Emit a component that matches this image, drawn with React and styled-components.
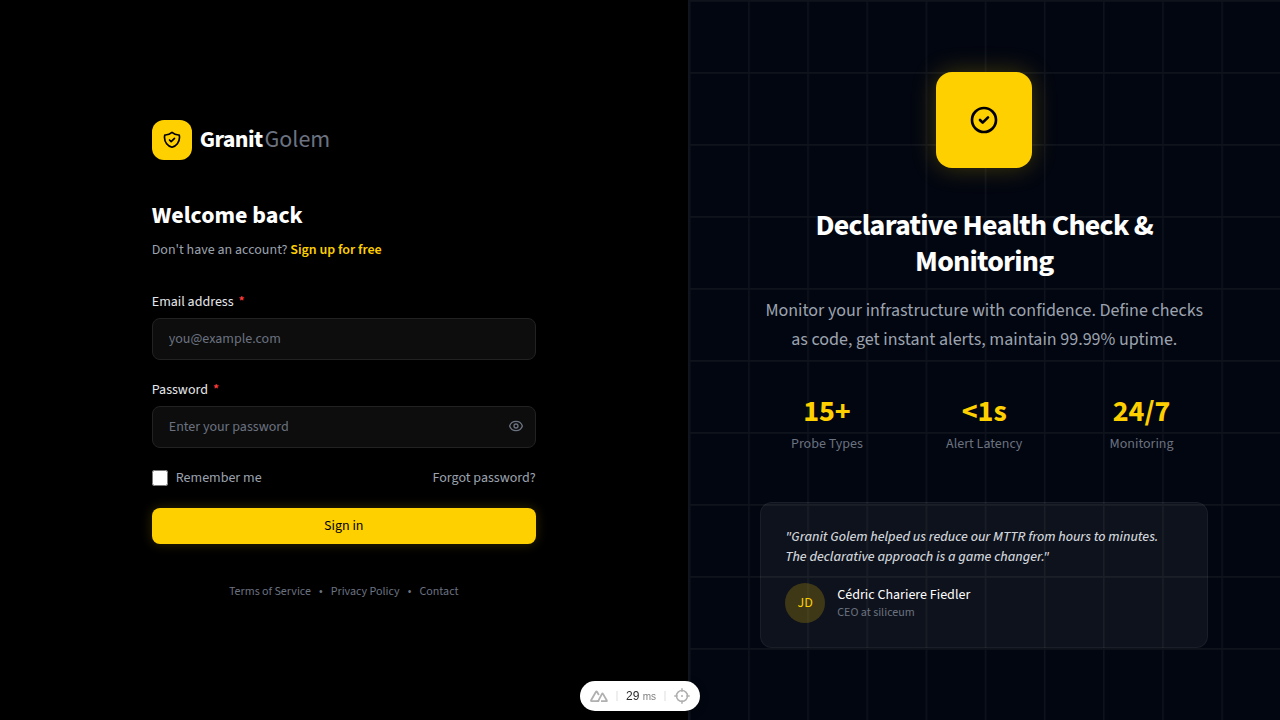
import * as React from 'react';
import styled, { createGlobalStyle } from 'styled-components';

const stats = [
  { value: '15+', label: 'Probe Types' },
  { value: '<1s', label: 'Alert Latency' },
  { value: '24/7', label: 'Monitoring' },
]

const footerLinks = ['Terms of Service', 'Privacy Policy', 'Contact']

const ShieldIcon = () => (
  <svg width="20" height="20" viewBox="0 0 24 24" fill="none" stroke="currentColor" strokeWidth="2" strokeLinecap="round" strokeLinejoin="round" aria-hidden="true">
    <path d="M9 12l2 2 4-4m5.618-4.016A11.955 11.955 0 0112 2.944a11.955 11.955 0 01-8.618 3.04A12.02 12.02 0 003 9c0 5.591 3.824 10.29 9 11.622 5.176-1.332 9-6.03 9-11.622 0-1.042-.133-2.052-.382-3.016z" />
  </svg>
)

const CheckCircleIcon = () => (
  <svg width="32" height="32" viewBox="0 0 24 24" fill="none" stroke="currentColor" strokeWidth="2" strokeLinecap="round" strokeLinejoin="round" aria-hidden="true">
    <path d="M9 12l2 2 4-4m6 2a9 9 0 11-18 0 9 9 0 0118 0z" />
  </svg>
)

const EyeIcon = () => (
  <svg width="16" height="16" viewBox="0 0 24 24" fill="none" stroke="currentColor" strokeWidth="2" strokeLinecap="round" strokeLinejoin="round" aria-hidden="true">
    <path d="M15 12a3 3 0 11-6 0 3 3 0 016 0z" />
    <path d="M2.458 12C3.732 7.943 7.523 5 12 5c4.478 0 8.268 2.943 9.542 7-1.274 4.057-5.064 7-9.542 7-4.477 0-8.268-2.943-9.542-7z" />
  </svg>
)

const NuxtIcon = () => (
  <svg width="18" height="12" viewBox="0 0 18 12" fill="none" stroke="currentColor" strokeWidth="1.8" strokeLinejoin="round" aria-hidden="true">
    <path d="M9.2 11.1H1.5Q.7 11.1 1.1 10.3L6 1.7Q6.5.9 7 1.7L8.9 5" />
    <path d="M6.6 11.1H7.2Q8.2 11.1 8.7 10.2L12 3.9Q12.5 3 13 3.9L16.7 10.2Q17.2 11.1 16.4 11.1H11" />
  </svg>
)

const TargetIcon = () => (
  <svg width="16" height="16" viewBox="0 0 16 16" fill="none" stroke="currentColor" strokeWidth="1.5" strokeLinecap="round" aria-hidden="true">
    <circle cx="8" cy="8" r="5.5" />
    <path d="M8 .8V3.2M8 12.8V15.2M.8 8H3.2M12.8 8H15.2" />
    <circle cx="8" cy="8" r="1" fill="currentColor" stroke="none" />
  </svg>
)

export default function App() {
  const [showPassword, setShowPassword] = React.useState(false)

  const handleSubmit = (e) => {
    e.preventDefault()
  }

  return <>
    <GlobalStyle />
    <Page>
      <FormPanel>
        <FormInner>
          <Brand>
            <BrandMark><ShieldIcon /></BrandMark>
            <BrandName>Granit<span>Golem</span></BrandName>
          </Brand>

          <Title>Welcome back</Title>
          <Subtitle>Don't have an account? <a href="#signup">Sign up for free</a></Subtitle>

          <Form onSubmit={handleSubmit}>
            <Field>
              <label htmlFor="email">Email address<Required>*</Required></label>
              <Input id="email" type="email" placeholder="you@example.com" />
            </Field>
            <Field>
              <label htmlFor="password">Password<Required>*</Required></label>
              <InputWrapper>
                <Input id="password" type={showPassword ? 'text' : 'password'} placeholder="Enter your password" $withIcon />
                <EyeButton type="button" aria-label="Show password" onClick={() => setShowPassword(!showPassword)}>
                  <EyeIcon />
                </EyeButton>
              </InputWrapper>
            </Field>
            <Options>
              <Remember htmlFor="remember">
                <input id="remember" type="checkbox" />
                Remember me
              </Remember>
              <a href="#forgot">Forgot password?</a>
            </Options>
            <SubmitButton type="submit">Sign in</SubmitButton>
          </Form>

          <Footer>
            {footerLinks.map((link, index) => (
              <React.Fragment key={link}>
                {index > 0 && <span>•</span>}
                <a href="#footer">{link}</a>
              </React.Fragment>
            ))}
          </Footer>
        </FormInner>
      </FormPanel>

      <HeroPanel>
        <GridLines aria-hidden="true" viewBox="0 0 100 100" preserveAspectRatio="none">
          <defs>
            <pattern id="grid" width="10" height="10" patternUnits="userSpaceOnUse">
              <path d="M 10 0 L 0 0 0 10" fill="none" stroke="currentColor" strokeWidth="0.5" />
            </pattern>
          </defs>
          <rect width="100" height="100" fill="url(#grid)" />
        </GridLines>
        <HeroInner>
          <HeroMark><CheckCircleIcon /></HeroMark>
          <HeroTitle>Declarative Health Check &amp; Monitoring</HeroTitle>
          <HeroText>Monitor your infrastructure with confidence. Define checks as code, get instant alerts, maintain 99.99% uptime.</HeroText>
          <Stats>
            {stats.map((stat) => (
              <Stat key={stat.label}>
                <strong>{stat.value}</strong>
                <span>{stat.label}</span>
              </Stat>
            ))}
          </Stats>
          <Testimonial>
            <blockquote>"Granit Golem helped us reduce our MTTR from hours to minutes. The declarative approach is a game changer."</blockquote>
            <Author>
              <Avatar>JD</Avatar>
              <div>
                <AuthorName>Cédric Chariere Fiedler</AuthorName>
                <AuthorRole>CEO at siliceum</AuthorRole>
              </div>
            </Author>
          </Testimonial>
        </HeroInner>
      </HeroPanel>
    </Page>

    <DevPill>
      <PillButton type="button" aria-label="Toggle devtools"><NuxtIcon /></PillButton>
      <Divider />
      <LoadTime>29 <small>ms</small></LoadTime>
      <Divider />
      <PillButton type="button" aria-label="Inspect component"><TargetIcon /></PillButton>
    </DevPill>
  </>
}

const GlobalStyle = createGlobalStyle`
  *, *::before, *::after {
    box-sizing: border-box;
  }
  body {
    margin: 0;
    background: #000;
    color: #fff;
    font-family: "Source Sans 3", "Noto Sans CJK JP", "Noto Sans", sans-serif;
    font-size: 14px;
    line-height: 20px;
  }
  h1, h2, p, blockquote {
    margin: 0;
  }
  a {
    color: inherit;
    text-decoration: none;
  }
  button, input {
    font: inherit;
  }
  svg {
    display: block;
  }
`

const Page = styled.div`
  display: flex;
  min-height: 100vh;
`

const FormPanel = styled.main`
  flex: 1;
  display: flex;
  align-items: center;
  justify-content: center;
  padding: 48px;
`

const FormInner = styled.div`
  width: 100%;
  max-width: 384px;
`

const Brand = styled.div`
  display: flex;
  align-items: center;
  gap: 8px;
  margin-bottom: 40px;
`

const BrandMark = styled.div`
  display: flex;
  align-items: center;
  justify-content: center;
  width: 40px;
  height: 40px;
  border-radius: 12px;
  background: #ffd000;
  color: #000;
`

const BrandName = styled.div`
  font-size: 24px;
  line-height: 32px;
  font-weight: 700;
  letter-spacing: -0.025em;
  span {
    margin-left: 2px;
    color: #6b7280;
    font-weight: 400;
    letter-spacing: 0;
  }
`

const Title = styled.h1`
  margin-bottom: 8px;
  font-size: 24px;
  line-height: 32px;
  font-weight: 700;
`

const Subtitle = styled.p`
  margin-bottom: 32px;
  color: #9ca3af;
  a {
    color: #ffd000;
    font-weight: 600;
  }
`

const Form = styled.form`
  display: flex;
  flex-direction: column;
  gap: 20px;
`

const Field = styled.div`
  display: flex;
  flex-direction: column;
  gap: 6px;
  label {
    color: #e5e7eb;
  }
`

const Required = styled.span`
  margin-left: 5px;
  color: #ff3b3b;
  font-weight: 600;
`

const InputWrapper = styled.div`
  position: relative;
`

const Input = styled.input`
  display: block;
  width: 100%;
  height: 42px;
  padding: 10px 16px;
  padding-right: ${(props) => (props.$withIcon ? '44px' : '16px')};
  border: 1px solid #222;
  border-radius: 8px;
  background: #0d0d0d;
  color: #fff;
  outline: none;
  &::placeholder {
    color: #6b7280;
  }
  &:focus {
    border-color: #ffd000;
  }
`

const EyeButton = styled.button`
  position: absolute;
  top: 0;
  right: 12px;
  bottom: 2px;
  display: flex;
  align-items: center;
  padding: 0;
  border: 0;
  background: none;
  color: #6b7280;
  cursor: pointer;
`

const Options = styled.div`
  display: flex;
  align-items: center;
  justify-content: space-between;
  color: #9ca3af;
`

const Remember = styled.label`
  display: flex;
  align-items: center;
  gap: 8px;
  input {
    width: 16px;
    height: 16px;
    margin: 0;
  }
`

const SubmitButton = styled.button`
  height: 36px;
  border: 0;
  border-radius: 8px;
  background: #ffd000;
  box-shadow: 0 0 12px rgba(255, 208, 0, 0.2);
  color: #000;
  cursor: pointer;
`

const Footer = styled.footer`
  display: flex;
  justify-content: center;
  gap: 8px;
  margin-top: 40px;
  color: #6b7280;
  font-size: 12px;
  line-height: 16px;
`

const HeroPanel = styled.section`
  position: relative;
  flex: 1;
  display: flex;
  align-items: center;
  justify-content: center;
  border-left: 1px solid #11151f;
  background: #020610;
`

const GridLines = styled.svg`
  position: absolute;
  inset: 0;
  width: 100%;
  height: 100%;
  color: rgba(255, 255, 255, 0.05);
`

const HeroInner = styled.div`
  position: relative;
  display: flex;
  flex-direction: column;
  align-items: center;
  width: 100%;
  max-width: 448px;
  text-align: center;
`

const HeroMark = styled.div`
  display: flex;
  align-items: center;
  justify-content: center;
  width: 96px;
  height: 96px;
  margin-bottom: 40px;
  border-radius: 16px;
  background: #ffd000;
  box-shadow: 0 0 24px rgba(255, 208, 0, 0.25);
  color: #000;
`

const HeroTitle = styled.h2`
  margin-bottom: 16px;
  font-size: 30px;
  line-height: 36px;
  font-weight: 700;
  letter-spacing: -0.025em;
`

const HeroText = styled.p`
  color: #9ca3af;
  font-size: 18px;
  line-height: 29px;
`

const Stats = styled.div`
  display: grid;
  grid-template-columns: repeat(3, 1fr);
  gap: 24px;
  width: 100%;
  margin: 40px 0 48px;
`

const Stat = styled.div`
  display: flex;
  flex-direction: column;
  gap: 4px;
  strong {
    color: #ffd000;
    font-size: 30px;
    line-height: 36px;
  }
  span {
    color: #6b7280;
  }
`

const Testimonial = styled.figure`
  width: 100%;
  margin: 0;
  padding: 24px;
  border: 1px solid rgba(255, 255, 255, 0.05);
  border-radius: 12px;
  background: rgba(255, 255, 255, 0.05);
  text-align: left;
  blockquote {
    max-width: 384px;
    margin-bottom: 16px;
    color: #d1d5db;
    font-style: italic;
    font-weight: 500;
  }
`

const Author = styled.figcaption`
  display: flex;
  align-items: center;
  gap: 12px;
`

const Avatar = styled.div`
  display: flex;
  align-items: center;
  justify-content: center;
  width: 40px;
  height: 40px;
  border-radius: 50%;
  background: rgba(255, 208, 0, 0.2);
  color: #ffd000;
`

const AuthorName = styled.div`
  color: #fff;
`

const AuthorRole = styled.div`
  color: #6b7280;
  font-size: 12px;
  line-height: 16px;
`

const DevPill = styled.div`
  position: fixed;
  left: 50%;
  bottom: 9px;
  transform: translateX(-50%);
  display: flex;
  align-items: center;
  gap: 8px;
  height: 30px;
  padding: 0 10px;
  border-radius: 15px;
  background: #fff;
  box-shadow: 0 2px 8px rgba(0, 0, 0, 0.3);
  color: #2c2c2c;
  font-family: "Liberation Sans", Arial, sans-serif;
  font-size: 12px;
`

const PillButton = styled.button`
  padding: 0;
  border: 0;
  background: none;
  color: #b0b0b0;
  cursor: pointer;
`

const Divider = styled.span`
  width: 2px;
  height: 10px;
  background: #eee;
`

const LoadTime = styled.span`
  white-space: nowrap;
  small {
    color: #808080;
    font-size: 10px;
  }
`
